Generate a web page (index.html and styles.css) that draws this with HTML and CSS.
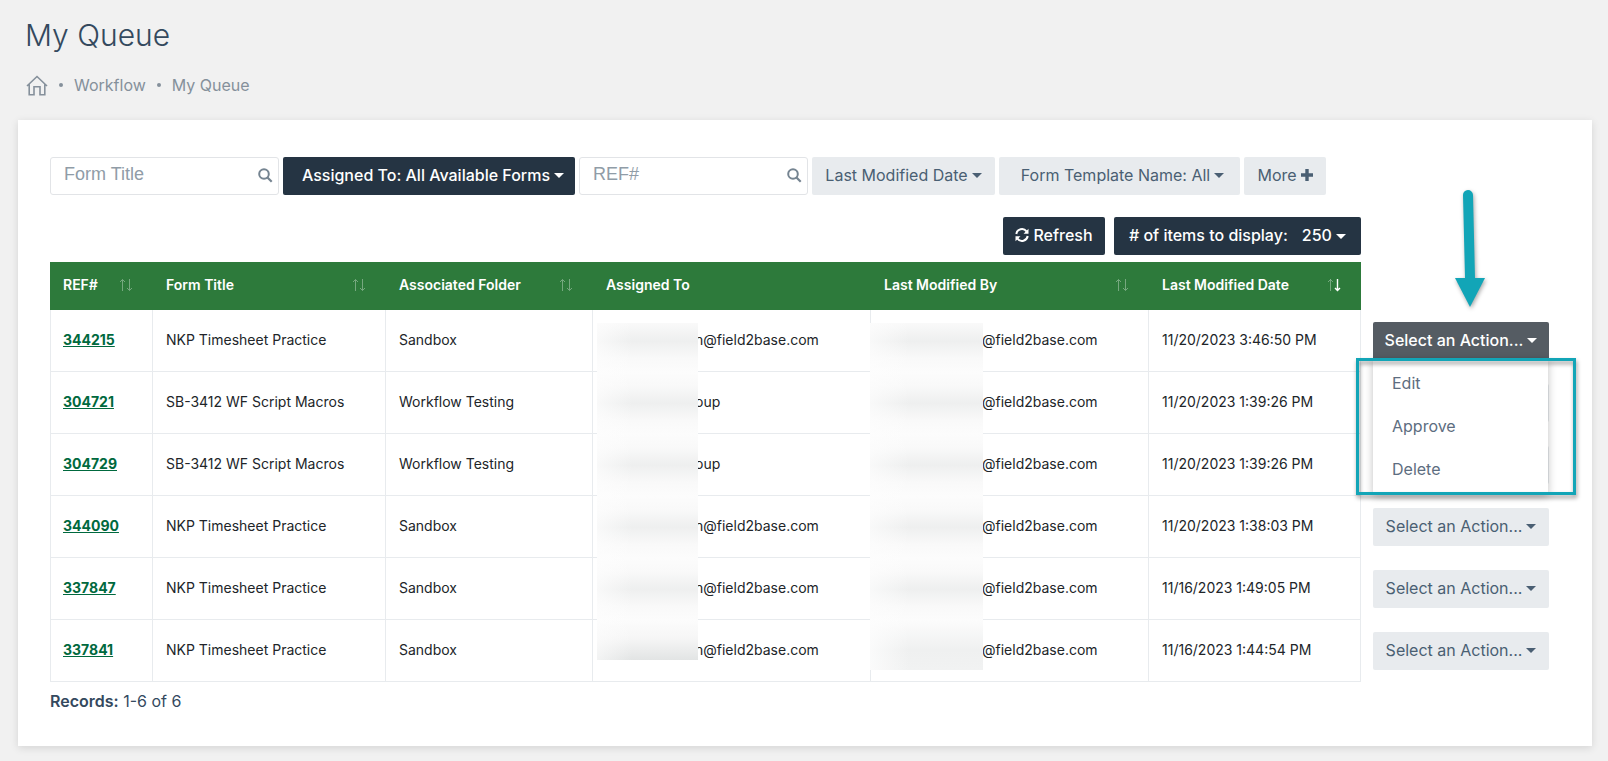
FILE: index.html
```html
<!DOCTYPE html>
<html lang="en">
  <head>
    <meta charset="UTF-8" />
    <meta name="viewport" content="width=device-width, initial-scale=1.0" />
    <title>My Queue</title>
    <link rel="stylesheet" href="styles.css">
  </head>
  <body>
    <svg class="sprite" aria-hidden="true">
      <symbol id="search" viewBox="0 0 15 15">
        <circle cx="6" cy="6" r="4.8" fill="none" stroke="currentColor" stroke-width="2" />
        <path d="M9.5 9.5l4.2 4.2" stroke="currentColor" stroke-width="2.2" />
      </symbol>
      <symbol id="sort" viewBox="0 0 14 14">
        <path d="M3.500 13V1.500M1 4l2.500-2.500L6 4" />
        <path d="M10.500 1v11.500M8 10l2.500 2.500L13 10" />
      </symbol>
      <symbol id="sort-desc" viewBox="0 0 14 14">
        <path d="M3.500 13V1.500M1 4l2.500-2.500L6 4" opacity="0.35" />
        <path d="M10.500 1v11.500M8 10l2.500 2.500L13 10" stroke-width="1.400" />
      </symbol>
    </svg>

    <header class="page-head">
      <h1>My Queue</h1>
      <nav class="breadcrumb">
        <a href="#" aria-label="Home">
          <svg width="22" height="21" viewBox="0 0 22 21" fill="none" stroke="currentColor" stroke-width="1.600">
            <path d="M1 11L11 1.500 21 11M3.200 9.500v10.300h4.800v-8h6v8h4.800V9.500" />
          </svg>
        </a>
        <span class="dot"></span>
        <a href="#">Workflow</a>
        <span class="dot"></span>
        <a href="#">My Queue</a>
      </nav>
    </header>

    <main class="card">
      <div class="filters">
        <div class="search-box">
          <input type="text" placeholder="Form Title" aria-label="Form Title" />
          <svg><use href="#search" /></svg>
        </div>
        <button class="btn dark assigned">Assigned To: All Available Forms <i class="caret"></i></button>
        <div class="search-box">
          <input type="text" placeholder="REF#" aria-label="REF#" />
          <svg><use href="#search" /></svg>
        </div>
        <button class="btn modified">Last Modified Date <i class="caret"></i></button>
        <button class="btn template">Form Template Name: All <i class="caret"></i></button>
        <button class="btn more">More
          <svg width="12" height="12" viewBox="0 0 12 12"><path d="M6 0v12M0 6h12" stroke="currentColor" stroke-width="3.400" /></svg>
        </button>
      </div>

      <div class="tools">
        <button class="btn dark refresh">
          <svg width="14" height="14" viewBox="0 0 14 14" fill="none" stroke="currentColor" stroke-width="2">
            <path d="M1.300 6A5.700 5.700 0 0 1 11.500 3.400M12.700 8A5.700 5.700 0 0 1 2.500 10.600" />
            <path d="M13.500 .8v5H8.500zM.5 13.200v-5h5z" fill="currentColor" stroke="none" />
          </svg>
          Refresh
        </button>
        <button class="btn dark items"># of items to display: <span>250 <i class="caret"></i></span></button>
      </div>

      <table>
        <colgroup>
          <col class="col-ref">
          <col class="col-title">
          <col class="col-folder">
          <col>
          <col>
          <col class="col-date">
          <col class="col-action">
        </colgroup>
        <thead>
          <tr>
            <th><div>REF# <svg class="sort"><use href="#sort" /></svg></div></th>
            <th><div>Form Title <svg class="sort"><use href="#sort" /></svg></div></th>
            <th><div>Associated Folder <svg class="sort"><use href="#sort" /></svg></div></th>
            <th><div>Assigned To</div></th>
            <th><div>Last Modified By <svg class="sort"><use href="#sort" /></svg></div></th>
            <th><div>Last Modified Date <svg class="sort active"><use href="#sort-desc" /></svg></div></th>
            <td class="action"></td>
          </tr>
        </thead>
        <tbody>
          <tr>
            <td><a href="#">344215</a></td>
            <td>NKP Timesheet Practice</td>
            <td>Sandbox</td>
            <td class="assignee"><span class="mask"></span>n@field2base.com</td>
            <td class="modifier"><span class="mask"></span>@field2base.com</td>
            <td>11/20/2023 3:46:50 PM</td>
            <td class="action">
              <button class="btn open" aria-expanded="true">Select an Action... <i class="caret"></i></button>
              <svg class="arrow" width="36" height="124" viewBox="0 0 36 124">
                <path d="M16 9L18 92" stroke="#12a5b7" stroke-width="10" stroke-linecap="round" />
                <path d="M3 92h30L18 121z" fill="#12a5b7" />
              </svg>
              <ul class="menu">
                <li><a href="#">Edit</a></li>
                <li><a href="#">Approve</a></li>
                <li><a href="#">Delete</a></li>
              </ul>
              <div class="callout"></div>
            </td>
          </tr>
          <tr>
            <td><a href="#">304721</a></td>
            <td>SB-3412 WF Script Macros</td>
            <td>Workflow Testing</td>
            <td class="assignee"><span class="mask"></span>oup</td>
            <td class="modifier"><span class="mask"></span>@field2base.com</td>
            <td>11/20/2023 1:39:26 PM</td>
            <td class="action"><button class="btn" aria-label="Select an Action"></button></td>
          </tr>
          <tr>
            <td><a href="#">304729</a></td>
            <td>SB-3412 WF Script Macros</td>
            <td>Workflow Testing</td>
            <td class="assignee"><span class="mask"></span>oup</td>
            <td class="modifier"><span class="mask"></span>@field2base.com</td>
            <td>11/20/2023 1:39:26 PM</td>
            <td class="action"><button class="btn" aria-label="Select an Action"></button></td>
          </tr>
          <tr>
            <td><a href="#">344090</a></td>
            <td>NKP Timesheet Practice</td>
            <td>Sandbox</td>
            <td class="assignee"><span class="mask"></span>n@field2base.com</td>
            <td class="modifier"><span class="mask"></span>@field2base.com</td>
            <td>11/20/2023 1:38:03 PM</td>
            <td class="action"><button class="btn">Select an Action... <i class="caret"></i></button></td>
          </tr>
          <tr>
            <td><a href="#">337847</a></td>
            <td>NKP Timesheet Practice</td>
            <td>Sandbox</td>
            <td class="assignee"><span class="mask"></span>n@field2base.com</td>
            <td class="modifier"><span class="mask"></span>@field2base.com</td>
            <td>11/16/2023 1:49:05 PM</td>
            <td class="action"><button class="btn">Select an Action... <i class="caret"></i></button></td>
          </tr>
          <tr>
            <td><a href="#">337841</a></td>
            <td>NKP Timesheet Practice</td>
            <td>Sandbox</td>
            <td class="assignee"><span class="mask"></span>n@field2base.com</td>
            <td class="modifier"><span class="mask"></span>@field2base.com</td>
            <td>11/16/2023 1:44:54 PM</td>
            <td class="action"><button class="btn">Select an Action... <i class="caret"></i></button></td>
          </tr>
        </tbody>
      </table>

      <p class="records"><b>Records:</b> 1-6 of 6</p>
    </main>
  </body>
</html>
```
FILE: styles.css
```css
* {
  box-sizing: border-box;
}

body {
  margin: 0;
  padding: 15px 16px 16px 18px;
  background: #f1f1f1;
  color: #34495e;
  font-family: Inter, sans-serif;
  font-size: 16px;
}

a {
  color: inherit;
  text-decoration: none;
}

.sprite {
  display: none;
}

.page-head {
  padding-left: 7px;
}

h1 {
  margin: 0;
  font-size: 30px;
  font-weight: 300;
  line-height: 40px;
}

.breadcrumb {
  display: flex;
  align-items: center;
  height: 24px;
  margin-top: 18px;
  color: #85909b;
}

.breadcrumb svg {
  display: block;
  margin-left: 1px;
}

.dot {
  width: 4px;
  height: 4px;
  margin: 0 11px;
  border-radius: 50%;
  background: #85909b;
}

.card {
  margin-top: 23px;
  padding: 37px 43px 34px 32px;
  background: white;
  box-shadow: 0 2px 8px rgba(0, 0, 0, 0.12);
}

.filters {
  display: flex;
  gap: 4px;
}

.search-box {
  position: relative;
  width: 229px;
}

.search-box input {
  width: 100%;
  height: 38px;
  padding: 0 36px 3px 13px;
  border: 1px solid #e2e4e7;
  border-radius: 3px;
  background: white;
  font-family: "Liberation Sans", sans-serif;
  font-size: 18px;
}

.search-box input::placeholder {
  color: #909ca7;
}

.search-box svg {
  position: absolute;
  top: 11px;
  right: 6px;
  width: 15px;
  height: 15px;
  color: #758491;
}

.btn {
  display: flex;
  justify-content: center;
  align-items: center;
  gap: 4px;
  height: 38px;
  padding: 0 0 2px;
  border: none;
  border-radius: 2px;
  background: #e8ebee;
  color: #4a5f73;
  font-family: inherit;
  font-size: 16px;
  white-space: nowrap;
}

.btn.dark {
  background: #253443;
  color: white;
  font-weight: 500;
}

.caret {
  display: inline-block;
  border: 5px solid transparent;
  border-top-color: currentColor;
  border-bottom: none;
  vertical-align: 2px;
}

.assigned {
  width: 292px;
  padding-left: 8px;
}

.modified {
  width: 183px;
}

.template {
  width: 241px;
  padding-left: 6px;
}

.more {
  width: 82px;
}

.tools {
  display: flex;
  justify-content: flex-end;
  gap: 9px;
  margin: 22px 188px 7px 0;
}

.refresh {
  width: 102px;
}

.items {
  width: 247px;
  gap: 14px;
}

table {
  width: 100%;
  table-layout: fixed;
  border-spacing: 0;
  color: #212529;
  font-size: 14px;
}

.col-ref {
  width: 103px;
}

.col-title {
  width: 233px;
}

.col-folder {
  width: 207px;
}

.col-date {
  width: 212px;
}

.col-action {
  width: 188px;
}

th {
  height: 48px;
  padding: 0 20px 3px 13px;
  background: #2d7a3b;
  color: white;
  font-weight: 600;
  text-align: left;
  white-space: nowrap;
}

th div {
  display: flex;
  justify-content: space-between;
  align-items: center;
}

.sort {
  width: 14px;
  height: 14px;
  fill: none;
  stroke: white;
  stroke-width: 1;
  opacity: 0.35;
}

.sort.active {
  opacity: 1;
}

td {
  position: relative;
  height: 62px;
  padding: 0 0 2px 13px;
  border-right: 1px solid #e8ebee;
  border-bottom: 1px solid #e8ebee;
}

td:first-child {
  padding-left: 12px;
  border-left: 1px solid #e8ebee;
}

td:first-child a {
  color: #00693e;
  font-weight: 700;
  text-decoration: underline;
}

.action {
  padding: 0 0 0 12px;
  border: none;
}

thead .action {
  height: 48px;
}

.action .btn {
  width: 176px;
}

.action .open {
  background: #555c63;
  color: white;
  font-weight: 500;
}

/* blurred user names */
.mask {
  position: absolute;
  top: 0;
  bottom: -1px;
  background:
    linear-gradient(90deg, rgba(253, 253, 253, 0.7), rgba(253, 253, 253, 0) 35%),
    linear-gradient(#fcfcfc, #f9f9f9 22%, #eeefef 50%, #f9f9f9 78%, #fcfcfc) bottom / 100% 62px;
}

.assignee {
  padding-left: 102px;
}

.assignee .mask {
  left: 4px;
  width: 101px;
}

.modifier {
  padding-left: 111px;
}

.modifier .mask {
  left: -1px;
  width: 113px;
}

tbody tr:first-child .mask {
  top: 13px;
}

tbody tr:last-child .mask {
  bottom: 11px;
  background:
    linear-gradient(90deg, rgba(253, 253, 253, 0.8), rgba(253, 253, 253, 0) 35%),
    linear-gradient(#fcfcfc, #eff0f0 60%, #f1f2f2);
}

tbody tr:last-child .assignee .mask {
  bottom: 21px;
  background:
    linear-gradient(90deg, rgba(253, 253, 253, 0.6), rgba(253, 253, 253, 0) 35%),
    linear-gradient(#fcfcfc, #f6f6f6 45%, #e2e4e4);
}

.menu {
  position: absolute;
  z-index: 1;
  top: 49px;
  left: 12px;
  width: 175px;
  margin: 0;
  padding: 3px 0;
  border-radius: 2px;
  background: white;
  box-shadow: 0 2px 8px rgba(0, 0, 0, 0.25);
  list-style: none;
}

.menu a {
  display: block;
  padding-left: 19px;
  color: #5d6d80;
  font-size: 16px;
  line-height: 43px;
}

.callout {
  position: absolute;
  z-index: 2;
  top: 48px;
  left: -5px;
  width: 220px;
  height: 137px;
  border: 3px solid #12a5b7;
  filter: drop-shadow(1px 3px 2px rgba(0, 0, 0, 0.4));
  pointer-events: none;
}

.arrow {
  position: absolute;
  bottom: 62px;
  left: 91px;
  filter: drop-shadow(1px 2px 2px rgba(0, 0, 0, 0.35));
}

.records {
  margin: 8px 0 0;
  line-height: 22px;
}

.records b {
  font-weight: 600;
}
```
